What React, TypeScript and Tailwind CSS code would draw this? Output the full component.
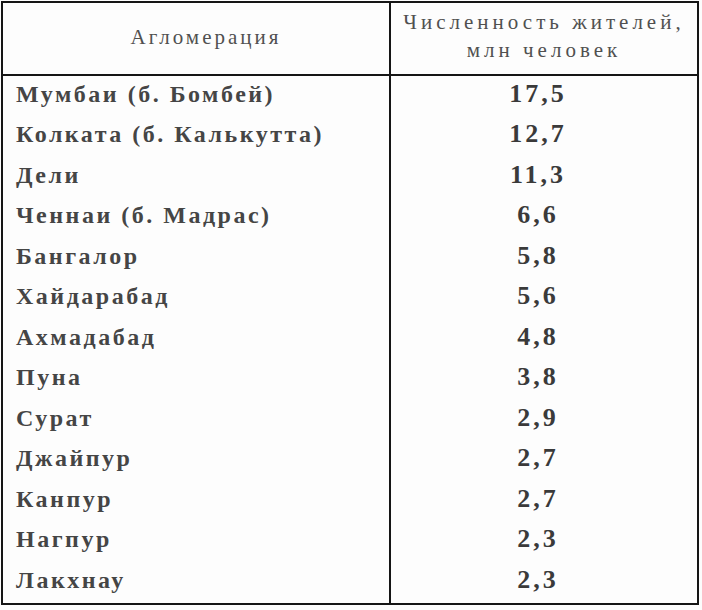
const rows: [string, string][] = [
  ["Мумбаи (б. Бомбей)", "17,5"],
  ["Колката (б. Калькутта)", "12,7"],
  ["Дели", "11,3"],
  ["Ченнаи (б. Мадрас)", "6,6"],
  ["Бангалор", "5,8"],
  ["Хайдарабад", "5,6"],
  ["Ахмадабад", "4,8"],
  ["Пуна", "3,8"],
  ["Сурат", "2,9"],
  ["Джайпур", "2,7"],
  ["Канпур", "2,7"],
  ["Нагпур", "2,3"],
  ["Лакхнау", "2,3"],
];

export default function App() {
  return (
    <div className="min-h-screen bg-[#fcfcfc] pt-px pl-px font-['Liberation_Serif',serif] text-[#454545]">
      <div className="w-[698px] border-2 border-[#151515] bg-[#fdfdfd]">
        {/* Шапка */}
        <div className="grid grid-cols-[388px_1fr] h-[73px] border-b-2 border-[#151515]">
          <div className="border-r-2 border-[#151515] flex items-center justify-center pl-5 pb-[2px] text-[21px] tracking-[3px] text-[#505050]">
            Агломерация
          </div>
          <div className="flex flex-col items-center justify-center pb-[6px] text-[21px] leading-[28px] tracking-[4px] text-[#505050]">
            <span>Численность жителей,</span>
            <span>млн человек</span>
          </div>
        </div>

        {/* Строки */}
        <div className="flex flex-col">
          {rows.map(([city, value]) => (
            <div key={city} className="grid grid-cols-[388px_1fr] h-[40.5px]">
              <div className="border-r-2 border-[#151515] flex items-center pl-[13px] pb-[5px] leading-none text-[24px] font-bold tracking-[2.5px]">
                {city}
              </div>
              <div className="flex items-center justify-center pb-[5px] pr-3 leading-none text-[26px] font-bold tracking-[3px] text-[#3a3a3a]">
                {value}
              </div>
            </div>
          ))}
        </div>
      </div>
    </div>
  );
}
